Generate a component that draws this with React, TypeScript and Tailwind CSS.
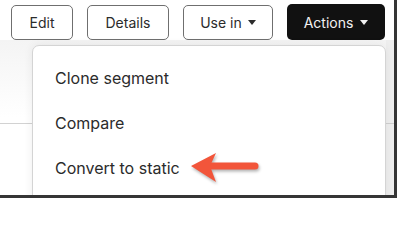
import React from 'react'

function Caret({ className }: { className?: string }) {
  return (
    <svg width="8" height="5" viewBox="0 0 8 5" className={className}>
      <path d="M0 0 L8 0 L4 5 Z" fill="currentColor" />
    </svg>
  )
}

function OutlineButton({ label, caret, width }: { label: string; caret?: boolean; width: string }) {
  return (
    <button
      className={`${width} h-[35px] flex items-center justify-center gap-[6px] rounded-[5px] border border-[#6f6f6f] bg-white text-[14px] text-[#2b2b2b]`}
    >
      {label}
      {caret && <Caret className="mt-[1px]" />}
    </button>
  )
}

export default function App() {
  return (
    <div className="w-[400px] h-[200px] bg-white overflow-hidden" style={{ fontFamily: 'Inter, "Open Sans", sans-serif' }}>
      <div className="relative w-[397px] h-[198px] overflow-hidden border-r-[3px] border-b-[3px] border-[#353535] bg-white">
        {/* toolbar */}
        <div className="flex items-center gap-[14px] pl-[11px] pt-[4px]">
          <OutlineButton label="Edit" width="w-[62px]" />
          <OutlineButton label="Details" width="w-[82px]" />
          <OutlineButton label="Use in" caret width="w-[90px]" />
          <button className="w-[98px] h-[36px] flex items-center justify-center gap-[7px] rounded-[5px] bg-[#111111] text-[14px] text-[#f2f2f2]">
            Actions
            <Caret className="mt-[1px]" />
          </button>
        </div>

        {/* page behind the menu */}
        <div className="absolute left-0 right-0 top-[40px] bottom-0 bg-gradient-to-b from-[#f4f4f4] via-white to-white">
          <div className="h-[84px] border-b border-[#d2d2d2]" />
        </div>
        <div className="absolute right-0 top-[40px] bottom-0 w-[8px] bg-[#eeeeee]">
          <div className="h-[84px] border-b border-[#cfcfcf]" />
        </div>

        {/* dropdown */}
        <div className="absolute left-[32px] top-[45px] w-[354px] h-[170px] rounded-t-[7px] border border-[#d4d4d4] bg-white shadow-[0_0_10px_rgba(0,0,0,0.07)]">
          <ul className="pt-[18px] pl-[22px] text-[16px] text-[#2b2b2b]">
            <li className="h-[28px] flex items-center">Clone segment</li>
            <li className="h-[28px] mt-[17px] flex items-center">Compare</li>
            <li className="h-[28px] mt-[17px] flex items-center">Convert to static</li>
          </ul>
        </div>

        {/* arrow annotation */}
        <svg
          className="absolute left-[186px] top-[148px]"
          width="76"
          height="40"
          viewBox="0 0 76 40"
          style={{ filter: 'drop-shadow(1px 2px 1.5px rgba(0,0,0,0.3))' }}
        >
          <path d="M23 18 L69 18" stroke="#f2553a" strokeWidth="7" strokeLinecap="round" />
          <path d="M5 18 L30 5 L24 18 L30 34 Z" fill="#f2553a" />
        </svg>
      </div>
    </div>
  )
}
